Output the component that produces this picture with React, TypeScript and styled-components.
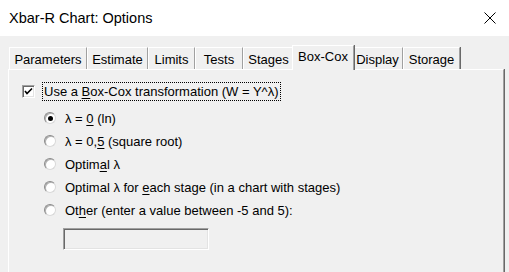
import React from 'react'
import styled, { createGlobalStyle } from 'styled-components'

const GlobalStyle = createGlobalStyle`
  html, body {
    margin: 0;
    padding: 0;
    background: #f0f0f0;
  }
  body {
    font-family: "Liberation Sans", Arial, sans-serif;
    font-size: 13px;
    color: #000;
  }
`

const Window = styled.div`
  width: 509px;
  height: 272px;
  display: flex;
  flex-direction: column;
  overflow: hidden;
  background: #f0f0f0;
`

const TitleBar = styled.div`
  height: 36px;
  flex: none;
  display: flex;
  align-items: center;
  justify-content: space-between;
  background: #fff;
  padding: 0 12px 0 9px;
  box-sizing: border-box;
`

const Title = styled.span`
  font-size: 14.5px;
  padding-bottom: 1px;
`

const CloseButton = styled.svg`
  width: 12px;
  height: 12px;
  margin-right: 1px;
`

const Body = styled.div`
  flex: 1;
  display: flex;
  flex-direction: column;
  padding: 8px 5px 0 8px;
`

const TabRow = styled.div`
  display: flex;
  align-items: flex-end;
  height: 25px;
  padding-left: 1px;
  position: relative;
  z-index: 1;
`

const Tab = styled.div<{ $w: number; $active?: boolean }>`
  box-sizing: border-box;
  width: ${p => p.$w}px;
  height: ${p => (p.$active ? 25 : 22)}px;
  margin: ${p => (p.$active ? '0 -2px -1px -2px' : '0')};
  padding-top: ${p => (p.$active ? 3 : 4)}px;
  text-align: center;
  background: #f0f0f0;
  border-top: 1px solid #fff;
  border-left: 1px solid #fff;
  border-right: 1px solid #a0a0a0;
  box-shadow: 1px 0 0 #696969;
  position: relative;
  z-index: ${p => (p.$active ? 2 : 0)};
  white-space: nowrap;
`

const Panel = styled.div`
  flex: 1;
  border-top: 1px solid #fff;
  border-left: 1px solid #fff;
  border-right: 1px solid #a0a0a0;
  box-shadow: 1px 0 0 #696969;
  padding: 13px 0 0 13px;
`

const CheckRow = styled.label`
  display: flex;
  align-items: center;
  gap: 8px;
  height: 16px;
`

const CheckBox = styled.span`
  flex: none;
  box-sizing: border-box;
  width: 13px;
  height: 13px;
  background: #fff;
  border-top: 1px solid #a0a0a0;
  border-left: 1px solid #a0a0a0;
  border-right: 1px solid #fff;
  border-bottom: 1px solid #fff;
  box-shadow: inset 1px 1px 0 #696969, inset -1px -1px 0 #e3e3e3;
  display: flex;
  align-items: center;
  justify-content: center;
`

const FocusLabel = styled.span`
  outline: 1px dotted #000;
  padding: 1px;
  line-height: 15px;
`

const RadioList = styled.div`
  display: flex;
  flex-direction: column;
  gap: 7px;
  padding: 11px 0 0 22px;
`

const RadioRow = styled.label`
  display: flex;
  align-items: center;
  gap: 9px;
  height: 16px;
`

const RadioCircle = styled.span<{ $checked?: boolean }>`
  flex: none;
  box-sizing: border-box;
  width: 12px;
  height: 12px;
  border-radius: 50%;
  background: #fff;
  border: 1px solid;
  border-color: #8a8a8a #d8d8d8 #d8d8d8 #8a8a8a;
  box-shadow: inset 1px 1px 0 #b0b0b0;
  display: flex;
  align-items: center;
  justify-content: center;
  &::after {
    content: '';
    display: ${p => (p.$checked ? 'block' : 'none')};
    width: 5px;
    height: 5px;
    border-radius: 50%;
    background: #000;
  }
`

const Key = styled.span`
  text-decoration: underline;
  text-underline-offset: 2px;
`

const ValueInput = styled.div`
  box-sizing: border-box;
  width: 146px;
  height: 22px;
  margin: 10px 0 0 41px;
  background: #f0f0f0;
  border-top: 1px solid #a0a0a0;
  border-left: 1px solid #a0a0a0;
  border-right: 1px solid #fff;
  border-bottom: 1px solid #fff;
  box-shadow: inset 1px 1px 0 #696969, inset -1px -1px 0 #e3e3e3;
`

const tabs = [
  { label: 'Parameters', w: 78 },
  { label: 'Estimate', w: 61 },
  { label: 'Limits', w: 47 },
  { label: 'Tests', w: 48 },
  { label: 'Stages', w: 51 },
  { label: 'Box-Cox', w: 62, active: true },
  { label: 'Display', w: 51 },
  { label: 'Storage', w: 57 },
]

const App = () => {
  return (
    <Window>
      <GlobalStyle />
      <TitleBar>
        <Title>Xbar-R Chart: Options</Title>
        <CloseButton viewBox="0 0 12 12">
          <path d="M0.5 0.5 L11.5 11.5 M11.5 0.5 L0.5 11.5" stroke="#000" strokeWidth="1" />
        </CloseButton>
      </TitleBar>

      <Body>
        <TabRow>
          {tabs.map(t => (
            <Tab key={t.label} $w={t.w} $active={t.active}>
              {t.label}
            </Tab>
          ))}
        </TabRow>

        <Panel>
          <CheckRow>
            <CheckBox>
              <svg width="9" height="9" viewBox="0 0 9 9">
                <path d="M1 4 L3 6.5 L8 1.5" stroke="#000" strokeWidth="1.6" fill="none" />
              </svg>
            </CheckBox>
            <FocusLabel>
              Use a <Key>B</Key>ox-Cox transformation (W = Y^λ)
            </FocusLabel>
          </CheckRow>

          <RadioList>
            <RadioRow>
              <RadioCircle $checked />
              <span>λ = <Key>0</Key> (ln)</span>
            </RadioRow>
            <RadioRow>
              <RadioCircle />
              <span>λ = 0,<Key>5</Key> (square root)</span>
            </RadioRow>
            <RadioRow>
              <RadioCircle />
              <span>Optim<Key>a</Key>l λ</span>
            </RadioRow>
            <RadioRow>
              <RadioCircle />
              <span>Optimal λ for <Key>e</Key>ach stage (in a chart with stages)</span>
            </RadioRow>
            <RadioRow>
              <RadioCircle />
              <span>Ot<Key>h</Key>er (enter a value between -5 and 5):</span>
            </RadioRow>
          </RadioList>

          <ValueInput />
        </Panel>
      </Body>
    </Window>
  )
}

export default App
